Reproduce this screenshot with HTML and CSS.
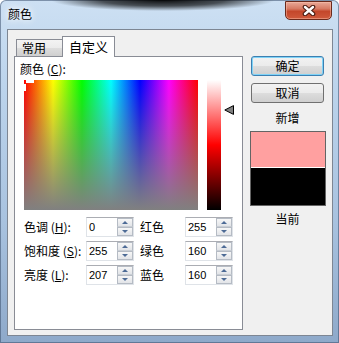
FILE: index.html
```html
<!DOCTYPE html>
<html>
<head>
<meta charset="utf-8">
<title>颜色</title>
<link rel="stylesheet" href="styles.css">
</head>
<body>
<div class="window">
	<div class="titlebar">
		<span class="title">颜色</span>
		<div class="close">
			<svg width="14" height="11" viewBox="0 0 14 11">
				<path d="M3 2 L11 9 M11 2 L3 9" stroke="#4a1c12" stroke-width="4.6" stroke-linecap="round" fill="none"/>
				<path d="M3 2 L11 9 M11 2 L3 9" stroke="#fff" stroke-width="2.4" stroke-linecap="round" fill="none"/>
			</svg>
		</div>
	</div>

	<div class="client">
		<div class="tabs">
			<div class="tabstrip">
				<div class="tab">常用</div>
				<div class="tab active">自定义</div>
			</div>
			<div class="panel">
				<div class="caption">颜色 (<u>C</u>):</div>

				<div class="picker">
					<div class="spectrum">
						<span class="cross-a"></span>
						<span class="cross-b"></span>
					</div>
					<div class="lum"></div>
					<div class="arrow">
						<svg width="10" height="10" viewBox="0 0 10 10"><polygon points="0.8,5 9.5,0.6 9.5,9.4" fill="#808080" stroke="#000" stroke-width="1"/></svg>
					</div>
				</div>

				<div class="fields">
					<div class="label">色调 (<u>H</u>):</div>
					<div class="spinbox"><span class="value">0</span><span class="spin"><i class="up"></i><i class="down"></i></span></div>
					<div class="label second">红色</div>
					<div class="spinbox"><span class="value">255</span><span class="spin"><i class="up"></i><i class="down"></i></span></div>

					<div class="label">饱和度 (<u>S</u>):</div>
					<div class="spinbox"><span class="value">255</span><span class="spin"><i class="up"></i><i class="down"></i></span></div>
					<div class="label second">绿色</div>
					<div class="spinbox"><span class="value">160</span><span class="spin"><i class="up"></i><i class="down"></i></span></div>

					<div class="label">亮度 (<u>L</u>):</div>
					<div class="spinbox"><span class="value">207</span><span class="spin"><i class="up"></i><i class="down"></i></span></div>
					<div class="label second">蓝色</div>
					<div class="spinbox"><span class="value">160</span><span class="spin"><i class="up"></i><i class="down"></i></span></div>
				</div>
			</div>
		</div>

		<div class="side">
			<div class="btn default">确定</div>
			<div class="btn">取消</div>
			<div class="side-label">新增</div>
			<div class="swatch">
				<div class="swatch-new"></div>
				<div class="swatch-old"></div>
			</div>
			<div class="side-label now">当前</div>
		</div>
	</div>
</div>
</body>
</html>
```

FILE: styles.css
```css
*{
	padding: 0;
	margin: 0;
	box-sizing: border-box;
}
body{
	overflow: hidden;
	font-family: "Noto Sans CJK SC", "Liberation Sans", sans-serif;
	font-size: 12px;
	color: #000;
}
u{
	text-decoration: underline;
}

/* window frame */
.window{
	width: 339px;
	height: 343px;
	display: flex;
	flex-direction: column;
	border-radius: 6px 6px 0 0;
	background: linear-gradient(to bottom, #cde0f3 0, #bcd4ec 25%, #a8c2df 65%, #8ea9ca 100%);
	box-shadow: inset 0 0 0 1px rgba(60, 80, 110, .55);
}
.titlebar{
	height: 29px;
	display: flex;
	justify-content: space-between;
	align-items: flex-start;
	padding: 0 7px 0 8px;
	background: radial-gradient(ellipse 112px 11px at 163px 0, rgba(0,0,0,.95) 0, rgba(0,0,0,.65) 55%, rgba(0,0,0,0) 100%);
}
.title{
	margin-top: 6px;
	line-height: 16px;
	text-shadow: 0 0 6px #fff, 0 0 10px #fff;
}
.close{
	width: 47px;
	height: 19px;
	margin-top: 1px;
	display: flex;
	align-items: center;
	justify-content: center;
	border: 1px solid #6b2a1c;
	border-radius: 0 0 5px 5px;
	background: linear-gradient(to bottom, #e9a998 0, #d77a63 40%, #c4472b 55%, #cf5a3c 100%);
	box-shadow: inset 0 0 0 1px rgba(255, 200, 180, .45);
}

/* client area */
.client{
	flex: 1;
	margin: 0 6px 7px 7px;
	border: 1px solid #7d8693;
	background: #f0f0f0;
	display: flex;
	padding: 6px 0 0 6px;
}
.tabs{
	width: 229px;
}
.tabstrip{
	height: 20px;
	display: flex;
	align-items: flex-end;
}
.tab{
	height: 17px;
	width: 46px;
	margin-left: 2px;
	border: 1px solid #898c95;
	border-bottom: none;
	border-right: none;
	background: linear-gradient(to bottom, #f3f3f3 0, #ebebeb 50%, #dddddd 51%, #cfcfcf 100%);
	line-height: 16px;
	padding-left: 5px;
}
.tab.active{
	position: relative;
	z-index: 1;
	height: 21px;
	width: 53px;
	margin: 0 0 -1px 0;
	border-right: 1px solid #898c95;
	background: #fff;
	font-size: 13px;
	line-height: 20px;
	padding-left: 6px;
}
.panel{
	height: 274px;
	border: 1px solid #898c95;
	background: #fff;
	padding: 4px 0 0 5px;
}
.caption{
	line-height: 16px;
}

/* colour picker */
.picker{
	display: flex;
	align-items: flex-start;
	margin: 3px 0 0 4px;
}
.spectrum{
	position: relative;
	width: 174px;
	height: 130px;
	background:
		linear-gradient(to bottom, rgba(128,128,128,0), rgb(128,128,128)),
		linear-gradient(to right, #f00 0, #ff0 16.7%, #0f0 33.3%, #0ff 50%, #00f 66.7%, #f0f 83.3%, #f00 100%);
}
.cross-a, .cross-b{
	position: absolute;
	background: #fff;
}
.cross-a{
	left: 2px; top: 0;
	width: 8px; height: 3px;
}
.cross-b{
	left: 0; top: 4px;
	width: 2px; height: 7px;
}
.lum{
	width: 14px;
	height: 130px;
	margin-left: 9px;
	background: linear-gradient(to bottom, #fff 0, #f00 50%, #000 100%);
}
.arrow{
	margin: 21px 0 0 3px;
	height: 10px;
}

/* value fields */
.fields{
	display: grid;
	grid-template-columns: 62px 48px 51px 48px;
	grid-auto-rows: 20px;
	row-gap: 4px;
	margin: 7px 0 0 4px;
}
.label{
	line-height: 20px;
	white-space: nowrap;
}
.label.second{
	padding-left: 6px;
}
.spinbox{
	display: flex;
	border: 1px solid #dfe3e8;
	border-top-color: #abadb3;
	background: #fff;
}
.value{
	flex: 1;
	padding-left: 2px;
	font-family: "Liberation Sans", Arial, sans-serif;
	font-size: 11px;
	line-height: 18px;
}
.spin{
	width: 16px;
	display: flex;
	flex-direction: column;
}
.spin i{
	flex: 1;
	display: flex;
	align-items: center;
	justify-content: center;
	border: 1px solid #b5bbc4;
	background: linear-gradient(to bottom, #f7f7f7, #e2e4e8);
}
.spin i.up{
	border-bottom-color: #c9ced5;
}
.spin i::after{
	content: "";
	width: 0; height: 0;
	border-left: 3px solid transparent;
	border-right: 3px solid transparent;
}
.spin i.up::after{
	border-bottom: 3px solid #4d6b96;
}
.spin i.down::after{
	border-top: 3px solid #4d6b96;
}

/* right column */
.side{
	width: 73px;
	margin: 20px 0 0 8px;
}
.btn{
	height: 20px;
	border: 1px solid #707070;
	border-radius: 3px;
	background: linear-gradient(to bottom, #f2f2f2 0, #ebebeb 50%, #dddddd 51%, #cfcfcf 100%);
	text-align: center;
	line-height: 18px;
	margin-bottom: 7px;
}
.btn.default{
	border-color: #3c7fb1;
	box-shadow: inset 0 0 0 1px #7fd3f7;
}
.side-label{
	text-align: center;
	line-height: 16px;
}
.swatch{
	width: 76px;
	margin: 5px 0 0 -1px;
	border: 1px solid #646464;
}
.swatch-new{
	height: 36px;
	background: #ffa0a0;
	border-bottom: 1px solid #fff;
}
.swatch-old{
	height: 37px;
	background: #000;
}
.side-label.now{
	margin-top: 5px;
}
```
